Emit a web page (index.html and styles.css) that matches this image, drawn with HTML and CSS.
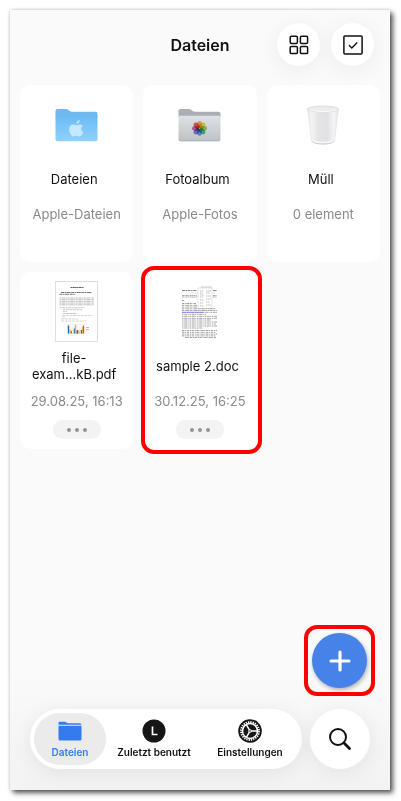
FILE: index.html
```html
<!DOCTYPE html>
<html lang="de">
<head>
    <meta charset="utf-8">
    <meta name="viewport" content="width=device-width, initial-scale=1">
    <title>Dateien</title>
    <link rel="stylesheet" href="styles.css">
</head>
<body>

<div class="screen">
    <header class="header">
        <h1>Dateien</h1>
        <div class="header-actions">
            <button class="round-button" type="button" aria-label="Ansicht">
                <svg width="20" height="20" viewBox="0 0 20 20" fill="none" stroke="#111" stroke-width="1.5">
                    <rect x="1.2" y="1.2" width="7.2" height="7.2" rx="1.2"/>
                    <rect x="11.4" y="1.2" width="7.2" height="7.2" rx="1.2"/>
                    <rect x="1.2" y="11.4" width="7.2" height="7.2" rx="1.2"/>
                    <rect x="11.4" y="11.4" width="7.2" height="7.2" rx="1.2"/>
                </svg>
            </button>
            <button class="round-button" type="button" aria-label="Auswählen">
                <svg width="20" height="20" viewBox="0 0 20 20" fill="none" stroke="#111" stroke-width="1.5">
                    <rect x="0.9" y="0.9" width="18.2" height="18.2" rx="1"/>
                    <path d="M6 10.2l2.8 2.7 5.4-5.4" stroke-width="1.4"/>
                </svg>
            </button>
        </div>
    </header>

    <main>
        <ul class="files">
            <li class="card">
                <a class="card-link" href="#">
                    <span class="thumb">
                        <svg width="43" height="34" viewBox="0 0 44 34">
                            <defs>
                                <linearGradient id="blue-folder" x1="0" y1="0" x2="0" y2="1">
                                    <stop offset="0" stop-color="#6bbaf5"/>
                                    <stop offset="1" stop-color="#8fd2fa"/>
                                </linearGradient>
                            </defs>
                            <path d="M0.5 8V2.5q0-2 2-2h8.500q1.500 0 2.500 1l1.500 1.200q1 .8 2.500.8h24q2 0 2 2V9z" fill="#6fb8ee"/>
                            <path d="M0.500 7.500h43V31.500q0 2-2 2h-39q-2 0-2-2z" fill="url(#blue-folder)"/>
                            <path d="M22 17.300c1 0 2-.9 3.600-.8 1.200.1 2.200.6 2.900 1.500-2.600 1.600-2.200 5 .5 6.100-.6 1.700-2 4.700-3.900 4.700-1.200 0-1.700-.7-3-.7s-1.900.7-3 .7c-2.600 0-4.600-4.500-4.600-7.500 0-2.900 1.900-4.700 4.100-4.700 1.400 0 2.400.7 3.400.7z" fill="#c6e8fc"/>
                            <path d="M21.900 15.900c-.1-2 1.600-3.700 3.300-3.900.2 2.100-1.400 3.900-3.300 3.900z" fill="#c6e8fc"/>
                        </svg>
                    </span>
                    <span class="name">Dateien</span>
                    <span class="info">Apple-Dateien</span>
                </a>
            </li>
            <li class="card">
                <a class="card-link" href="#">
                    <span class="thumb">
                        <svg width="43" height="34" viewBox="0 0 44 34">
                            <defs>
                                <linearGradient id="grey-folder" x1="0" y1="0" x2="0" y2="1">
                                    <stop offset="0" stop-color="#dfe2e4"/>
                                    <stop offset="1" stop-color="#bdc2c6"/>
                                </linearGradient>
                            </defs>
                            <path d="M0.500 9V2.500q0-2 2-2h8.500q1.500 0 2.500 1l1.500 1.200q1 .8 2.500.8h24q2 0 2 2V9z" fill="#a9afb4"/>
                            <path d="M0.500 7.500h43V31.500q0 2-2 2h-39q-2 0-2-2z" fill="url(#grey-folder)"/>
                            <path d="M1 32.200q.6 1 1.500 1h39q1 0 1.500-1" fill="none" stroke="#a5abb0" stroke-width=".7"/>
                            <g class="petals" transform="translate(22 20.500)">
                                <ellipse cy="-4" rx="2.500" ry="3.600" fill="#f7b04a"/>
                                <ellipse cy="-4" rx="2.500" ry="3.600" fill="#e6df52" transform="rotate(45)"/>
                                <ellipse cy="-4" rx="2.500" ry="3.600" fill="#a5cf62" transform="rotate(90)"/>
                                <ellipse cy="-4" rx="2.500" ry="3.600" fill="#62bd9f" transform="rotate(135)"/>
                                <ellipse cy="-4" rx="2.500" ry="3.600" fill="#6aa9ea" transform="rotate(180)"/>
                                <ellipse cy="-4" rx="2.500" ry="3.600" fill="#8f80d2" transform="rotate(225)"/>
                                <ellipse cy="-4" rx="2.500" ry="3.600" fill="#ce70ac" transform="rotate(270)"/>
                                <ellipse cy="-4" rx="2.500" ry="3.600" fill="#f06250" transform="rotate(315)"/>
                            </g>
                        </svg>
                    </span>
                    <span class="name">Fotoalbum</span>
                    <span class="info">Apple-Fotos</span>
                </a>
            </li>
            <li class="card">
                <a class="card-link" href="#">
                    <span class="thumb">
                        <svg width="34" height="40" viewBox="0 0 34 40">
                            <defs>
                                <linearGradient id="bin" x1="0" y1="0" x2="1" y2="0">
                                    <stop offset="0" stop-color="#e6e7e8"/>
                                    <stop offset=".15" stop-color="#f3f4f4"/>
                                    <stop offset=".35" stop-color="#e3e4e6"/>
                                    <stop offset=".65" stop-color="#e1e2e4"/>
                                    <stop offset=".85" stop-color="#f4f4f5"/>
                                    <stop offset="1" stop-color="#e2e3e4"/>
                                </linearGradient>
                            </defs>
                            <path d="M1.500 4l4 31.500Q7 39 17 39t11.500-3.500L32.500 4z" fill="url(#bin)" stroke="#e2e3e4" stroke-width=".6"/>
                            <path d="M6.300 34q2 2.800 10.700 2.800T27.700 34l-.3 2Q25 38.700 17 38.700T6.600 36z" fill="#f8f8f8"/>
                            <path d="M5.800 36Q8 39 17 39t11.200-3" fill="none" stroke="#c2c3c4" stroke-width=".8"/>
                            <ellipse cx="17" cy="4" rx="15.500" ry="2.900" fill="#ebeced" stroke="#d2d3d4" stroke-width=".7"/>
                            <path d="M3 4.600Q17 8.800 31 4.600" fill="none" stroke="#fafafa"/>
                        </svg>
                    </span>
                    <span class="name">Müll</span>
                    <span class="info">0 element</span>
                </a>
            </li>
            <li class="card">
                <a class="card-link" href="#">
                    <span class="thumb">
                        <svg width="43" height="61" viewBox="0 0 43 61" fill="none">
                            <rect x="0.500" y="0.500" width="42" height="60" fill="#fff" stroke="#dfdfdf"/>
                            <path d="M15.500 6.500h13" stroke="#666" stroke-width="1.100" stroke-dasharray="2 .4 3 .3"/>
                            <path d="M6 11.500h31M4.500 13.300h16" stroke="#777" stroke-width="1.100" stroke-dasharray="3 .6 1.500 .5 4 .6"/>
                            <path d="M4.500 17h34M4.500 18.700h35M4.500 20.400h34M4.500 22.100h35M4.500 23.800h34" stroke="#b4b4b4" stroke-width=".9" stroke-dasharray="2 .6 3.500 .5 1 .5"/>
                            <path d="M4.500 26.800h25" stroke="#b4b4b4" stroke-width=".8" stroke-dasharray="2 .6 3 .5"/>
                            <path d="M8 28.700h19M8 30.600h4M8 32.500h14" stroke="#bbb" stroke-width=".8" stroke-dasharray="2 .5 4 .5"/>
                            <path d="M7 34.500h31M7 36h4M6 38h17M6 40h25" stroke="#ccc" stroke-width=".8" stroke-dasharray="3 .7"/>
                            <path d="M12 43.500h18M12 46h18M12 49h18M12 52.500h18" stroke="#ddd" stroke-width=".5"/>
                            <path d="M13.500 44.500v8M19.500 47.500v5M22.500 49v3.500M26.500 49v3.500" stroke="#3167b5" stroke-width="1.500"/>
                            <path d="M15 48.500v4M20.500 44v8.500M24 50v2.500" stroke="#f0ae38" stroke-width="1.400"/>
                            <path d="M16.300 50v2.500M22 50.500v2M28.500 44.500v8" stroke="#dc4932" stroke-width="1.200"/>
                            <path d="M27.500 46v6.500" stroke="#f0ae38"/>
                            <path d="M31 46.500h3M31 48.500h3" stroke="#aaa" stroke-width=".8"/>
                        </svg>
                    </span>
                    <span class="name">file-<br>exam...kB.pdf</span>
                    <span class="info">29.08.25, 16:13</span>
                </a>
                <button class="more" type="button" aria-label="Mehr">
                    <svg width="22" height="6" viewBox="0 0 22 6" fill="#929297">
                        <circle cx="3" cy="3" r="2"/><circle cx="11" cy="3" r="2"/><circle cx="19" cy="3" r="2"/>
                    </svg>
                </button>
            </li>
            <li class="card marked">
                <a class="card-link" href="#">
                    <span class="thumb">
                        <svg width="36" height="52" viewBox="0 0 36 52" fill="none">
                            <path d="M0 4.500h15M31 4.500h4" stroke="#888" stroke-width="1.100" stroke-dasharray="3 .5 1.500 .6"/>
                            <path d="M7 7h9M31 7h3" stroke="#ccc" stroke-width=".8" stroke-dasharray="1 .5"/>
                            <path d="M0 9.500h15M0 11h15M31 9.500h4M31 11h4" stroke="#aaa" stroke-dasharray="2 .4 1 .4"/>
                            <path d="M16 2h14M16 2v20M30 2v21M16 22.500h14" stroke="#d8d8d8" stroke-width=".7"/>
                            <path d="M19 1h11M18 5h4M24 5h5M18 7h3M24 7h4M18 9h4M18 11h3M24 10h5M18 14h4M24 13h5M18 17h3M24 16h4M18 20h4M24 19h5" stroke="#aaa" stroke-width=".8" stroke-dasharray="1.500 .6"/>
                            <path d="M0 14.500h2M0 17.500h14M0 19.300h15M0 21h15M0 22.800h34M0 24.500h35" stroke="#a2a2a2" stroke-dasharray="2 .7 1 .5 3 .6"/>
                            <path d="M0 26.300h21" stroke="#8b8ee8" stroke-width="1.200" stroke-dasharray="4 .3"/>
                            <path d="M21 26.300h14M0 28.300h24M0 30.300h35M0 32.300h35M0 34h30M0 36h35M0 38h34M0 40h35M0 42h20" stroke="#a2a2a2" stroke-dasharray="1.500 .7 3 .5 1 .8"/>
                            <path d="M0 44.500h35M0 46.300h34M0 48.100h35M0 49.900h34M3 51.500h31" stroke="#a2a2a2" stroke-dasharray="2.500 .7 1 .6"/>
                        </svg>
                    </span>
                    <span class="name">sample 2.doc</span>
                    <span class="info">30.12.25, 16:25</span>
                </a>
                <button class="more" type="button" aria-label="Mehr">
                    <svg width="22" height="6" viewBox="0 0 22 6" fill="#929297">
                        <circle cx="3" cy="3" r="2"/><circle cx="11" cy="3" r="2"/><circle cx="19" cy="3" r="2"/>
                    </svg>
                </button>
            </li>
        </ul>
    </main>

    <div class="add-box">
        <button class="add" type="button" aria-label="Hinzufügen">
            <svg width="22" height="22" viewBox="0 0 22 22" stroke="#fff" stroke-width="3.200" stroke-linecap="round">
                <path d="M11 2v18M2 11h18"/>
            </svg>
        </button>
    </div>

    <footer class="bottom">
        <nav class="tabs">
            <a class="tab active" href="#">
                <svg width="24" height="24" viewBox="0 0 24 24" fill="#347bee">
                    <path d="M.5 5.700V4q0-1.300 1.300-1.300h5q.8 0 1.400.6l.6.5q.5.4 1.200.4h12q1.500 0 1.500 1.500z"/>
                    <path d="M.5 6.700h23V20q0 1.500-1.500 1.500H2Q.5 21.500.5 20z"/>
                </svg>
                <span>Dateien</span>
            </a>
            <a class="tab" href="#">
                <svg width="24" height="24" viewBox="0 0 24 24">
                    <circle cx="12" cy="12" r="11.500" fill="#161616"/>
                    <path d="M10.500 7.500v8h5" fill="none" stroke="#fff" stroke-width="1.700"/>
                </svg>
                <span>Zuletzt benutzt</span>
            </a>
            <a class="tab" href="#">
                <svg width="24" height="24" viewBox="0 0 24 24" fill="none">
                    <circle cx="12" cy="12" r="11.800" fill="#161616"/>
                    <circle cx="12" cy="12" r="9" stroke="#fff" stroke-width="1.800" stroke-dasharray="1.350 1.006"/>
                    <circle cx="12" cy="12" r="7.500" stroke="#fff" stroke-width="1.500"/>
                    <path d="M12 12h7M12 12l-3.500-6.100M12 12l-3.500 6.100" stroke="#fff" stroke-width="1.500"/>
                    <circle cx="12" cy="12" r="1.700" fill="#fff"/>
                    <circle cx="12" cy="12" r=".8" fill="#161616"/>
                </svg>
                <span>Einstellungen</span>
            </a>
        </nav>
        <button class="search" type="button" aria-label="Suchen">
            <svg width="24" height="24" viewBox="0 0 24 24" fill="none" stroke="#111" stroke-linecap="round">
                <circle cx="10" cy="10" r="8" stroke-width="2"/>
                <path d="M16 16l5.500 5.500" stroke-width="2.800"/>
            </svg>
        </button>
    </footer>
</div>

</body>
</html>
```

FILE: styles.css
```css
* {
    box-sizing: border-box;
}

body {
    margin: 0;
    padding: 10px 11px 11px 10px;
    background-color: #fff;
    color: #111;
    font-family: Inter, "Liberation Sans", sans-serif;
}

/* The phone screen with its drop shadow */
.screen {
    display: flex;
    flex-direction: column;
    min-height: calc(100vh - 21px);
    background: linear-gradient(#fafafa, #fafafa 85%, #f3f3f3);
    box-shadow: 3px 3px 5px rgba(0, 0, 0, 0.65), 0 0 3px rgba(0, 0, 0, 0.2);
}

button {
    display: flex;
    align-items: center;
    justify-content: center;
    padding: 0;
    border: none;
    cursor: pointer;
}

a {
    color: inherit;
    text-decoration: none;
}

/* Title bar */
.header {
    display: grid;
    grid-template-columns: 1fr auto 1fr;
    align-items: center;
    padding: 13px 16px 19px;
}

h1 {
    grid-column: 2;
    margin: 0;
    font-size: 16px;
    font-weight: 600;
    line-height: 20px;
}

.header-actions {
    display: flex;
    justify-content: flex-end;
    gap: 11px;
}

.round-button {
    width: 43px;
    height: 43px;
    border-radius: 50%;
    background-color: #fff;
    box-shadow: 0 4px 22px rgba(0, 0, 0, 0.06);
}

/* File grid */
.files {
    display: grid;
    grid-template-columns: repeat(3, 1fr);
    gap: 10px;
    margin: 0;
    padding: 0 10px;
    list-style: none;
}

.card {
    position: relative;
    min-height: 177px;
    padding: 9px 0 10px;
    border-radius: 10px;
    background-color: #fff;
    text-align: center;
}

.card-link {
    display: block;
}

.thumb {
    display: flex;
    align-items: center;
    justify-content: center;
    height: 61px;
}

.petals ellipse {
    mix-blend-mode: multiply;
}

.name {
    display: flex;
    align-items: center;
    justify-content: center;
    height: 32px;
    margin-top: 8px;
    padding-right: 5px;
    font-size: 13px;
    line-height: 16px;
}

.info {
    display: block;
    margin-top: 11px;
    color: #8a8a8a;
    font-size: 13px;
    line-height: 16px;
}

.more {
    width: 48px;
    height: 19px;
    margin: 11px auto 0;
    border-radius: 10px;
    background-color: #f3f3f5;
}

/* Red frame around the marked file */
.marked::after {
    content: "";
    position: absolute;
    inset: -6px -5px -5px -2px;
    border: 4px solid #fe0000;
    border-radius: 13px;
    pointer-events: none;
}

/* Add button */
.add-box {
    align-self: flex-end;
    margin: auto 15px 13px;
    padding: 4px;
    border: 4px solid #fe0000;
    border-radius: 13px;
}

.add {
    width: 55px;
    height: 55px;
    border-radius: 50%;
    background-color: #4682e8;
    box-shadow: 1px 2px 4px rgba(0, 0, 0, 0.3);
}

/* Tab bar */
.bottom {
    display: flex;
    gap: 8px;
    padding: 0 20px 21px;
}

.tabs {
    display: flex;
    flex: 1;
    padding: 4px;
    border-radius: 30px;
    background-color: #fff;
    box-shadow: 0 4px 22px rgba(0, 0, 0, 0.08);
}

.tab {
    display: flex;
    flex: 1;
    flex-direction: column;
    align-items: center;
    justify-content: center;
    gap: 2px;
    font-size: 10px;
    font-weight: 600;
    line-height: 14px;
}

.active {
    flex: 0 0 72px;
    border-radius: 26px;
    background-color: #ebebeb;
    color: #347bee;
}

.search {
    width: 60px;
    height: 60px;
    border-radius: 50%;
    background-color: #fff;
    box-shadow: 0 4px 22px rgba(0, 0, 0, 0.08);
}
```
